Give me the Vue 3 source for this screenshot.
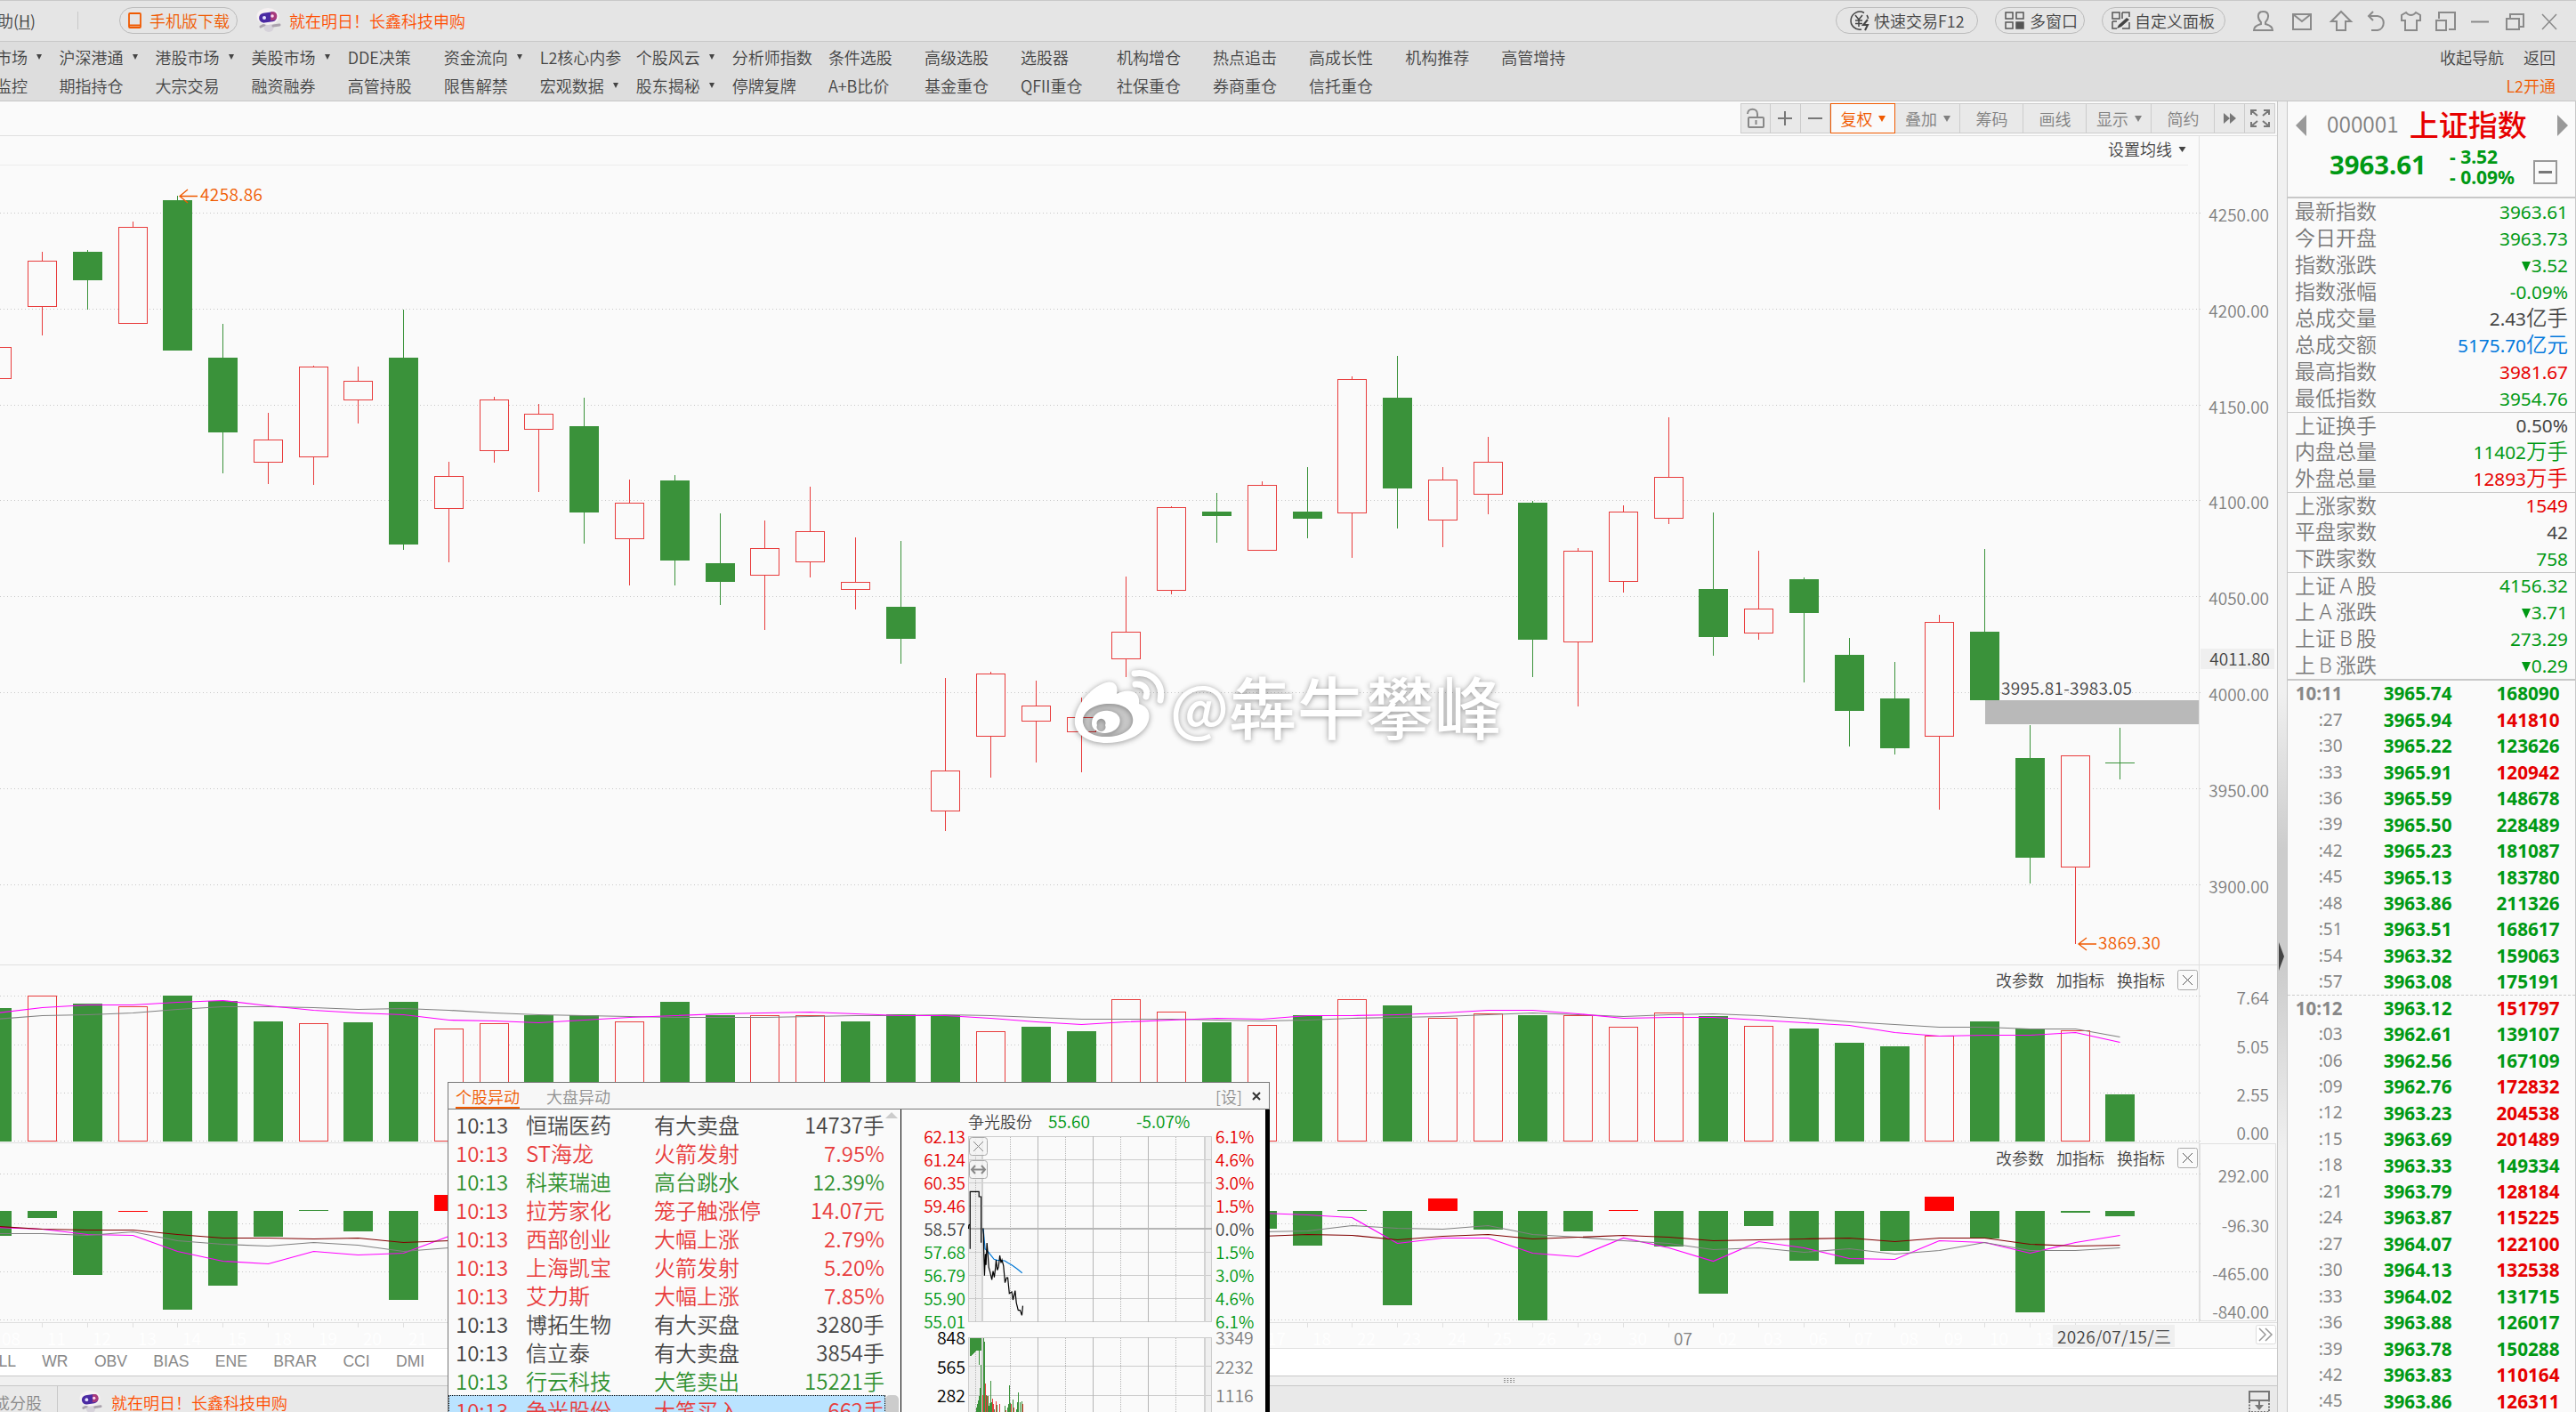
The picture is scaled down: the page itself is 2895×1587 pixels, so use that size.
<script setup>
import { computed } from "vue";

const navColumns = [
  ["沪深港通*", "期指持仓"],
  ["港股市场*", "大宗交易"],
  ["美股市场*", "融资融券"],
  ["DDE决策", "高管持股"],
  ["资金流向*", "限售解禁"],
  ["L2核心内参", "宏观数据*"],
  ["个股风云*", "股东揭秘*"],
  ["分析师指数", "停牌复牌"],
  ["条件选股", "A+B比价"],
  ["高级选股", "基金重仓"],
  ["选股器", "QFII重仓"],
  ["机构增仓", "社保重仓"],
  ["热点追击", "券商重仓"],
  ["高成长性", "信托重仓"],
  ["机构推荐", ""],
  ["高管增持", ""],
];

const stats = [
  ["最新指数", "3963.61", "", "down"],
  ["今日开盘", "3963.73", "", "down"],
  ["指数涨跌", "▼3.52", "", "down"],
  ["指数涨幅", "-0.09%", "", "down"],
  ["总成交量", "2.43", "亿手", "flat"],
  ["总成交额", "5175.70", "亿元", "blue"],
  ["最高指数", "3981.67", "", "up"],
  ["最低指数", "3954.76", "", "down"],
  ["上证换手", "0.50%", "", "flat"],
  ["内盘总量", "11402", "万手", "down"],
  ["外盘总量", "12893", "万手", "up"],
  ["上涨家数", "1549", "", "up"],
  ["平盘家数", "42", "", "flat"],
  ["下跌家数", "758", "", "down"],
  ["上证A股", "4156.32", "", "down"],
  ["上A涨跌", "▼3.71", "", "down"],
  ["上证B股", "273.29", "", "down"],
  ["上B涨跌", "▼0.29", "", "down"],
];
const ruledRows = [8, 11, 14];

const ticks = [
  ["10:11", "3965.74", "168090", "down"],
  [":27", "3965.94", "141810", "up"],
  [":30", "3965.22", "123626", "down"],
  [":33", "3965.91", "120942", "up"],
  [":36", "3965.59", "148678", "down"],
  [":39", "3965.50", "228489", "down"],
  [":42", "3965.23", "181087", "down"],
  [":45", "3965.13", "183780", "down"],
  [":48", "3963.86", "211326", "down"],
  [":51", "3963.51", "168617", "down"],
  [":54", "3963.32", "159063", "down"],
  [":57", "3963.08", "175191", "down"],
  ["10:12", "3963.12", "151797", "up"],
  [":03", "3962.61", "139107", "down"],
  [":06", "3962.56", "167109", "down"],
  [":09", "3962.76", "172832", "up"],
  [":12", "3963.23", "204538", "up"],
  [":15", "3963.69", "201489", "up"],
  [":18", "3963.33", "149334", "down"],
  [":21", "3963.79", "128184", "up"],
  [":24", "3963.87", "115225", "up"],
  [":27", "3964.07", "122100", "up"],
  [":30", "3964.13", "132538", "up"],
  [":33", "3964.02", "131715", "down"],
  [":36", "3963.88", "126017", "down"],
  [":39", "3963.78", "150288", "down"],
  [":42", "3963.83", "110164", "up"],
  [":45", "3963.86", "126311", "up"],
];

// r/g, high, body top, body bottom, low
const candles = [
  ["r", 390, 390, 425, 425],
  ["r", 283, 293, 344, 377],
  ["g", 281, 283, 315, 348],
  ["r", 249, 255, 363, 363],
  ["g", 220, 225, 394, 394],
  ["g", 364, 402, 486, 532],
  ["r", 464, 494, 519, 544],
  ["r", 411, 412, 513, 545],
  ["r", 412, 428, 449, 476],
  ["g", 348, 402, 612, 618],
  ["r", 519, 535, 571, 632],
  ["r", 446, 449, 506, 520],
  ["r", 454, 465, 482, 553],
  ["g", 447, 479, 576, 611],
  ["r", 539, 565, 605, 658],
  ["g", 534, 540, 630, 658],
  ["g", 577, 633, 654, 680],
  ["r", 585, 616, 646, 708],
  ["r", 547, 597, 631, 649],
  ["r", 604, 654, 662, 685],
  ["g", 608, 682, 718, 746],
  ["r", 762, 866, 911, 934],
  ["r", 755, 757, 827, 874],
  ["r", 765, 793, 810, 857],
  ["r", 784, 806, 822, 868],
  ["r", 648, 710, 740, 761],
  ["r", 569, 570, 663, 668],
  ["g", 554, 575, 580, 610],
  ["r", 541, 545, 618, 618],
  ["g", 525, 575, 583, 605],
  ["r", 423, 426, 576, 627],
  ["g", 400, 447, 549, 594],
  ["r", 525, 539, 584, 615],
  ["r", 491, 519, 555, 578],
  ["g", 563, 565, 719, 761],
  ["r", 616, 619, 721, 794],
  ["r", 568, 575, 653, 666],
  ["r", 469, 536, 582, 589],
  ["g", 576, 662, 716, 737],
  ["r", 619, 684, 711, 719],
  ["g", 649, 651, 689, 767],
  ["g", 717, 736, 799, 839],
  ["g", 744, 785, 841, 848],
  ["r", 691, 699, 827, 910],
  ["g", 617, 710, 787, 787],
  ["g", 815, 852, 964, 993],
  ["r", 849, 849, 974, 1061],
  ["g", 818, 857, 858, 876],
];

const volumes = [
  "g1133", "r1119", "g1128", "r1131", "g1119", "g1125", "g1148", "r1150", "g1149", "g1126",
  "r1156", "r1150", "g1141", "g1141", "r1148", "g1126", "g1141", "r1141", "r1141", "g1148",
  "g1140", "g1141", "r1159", "g1154", "g1159", "r1123", "r1137", "g1149", "r1152", "g1141",
  "r1123", "g1130", "r1144", "r1139", "g1141", "r1141", "r1154", "r1138", "g1142", "r1153",
  "g1156", "g1172", "g1176", "r1164", "g1148", "g1156", "r1158", "g1230",
];

const ZERO = 1361;
const flow = [
  1389, 1369, 1433, 1362, 1472, 1445, 1390, 1360, 1384, 1461,
  1343, 1361, 1361, 1361, 1361, 1361, 1361, 1361, 1361, 1361,
  1361, 1361, 1361, 1361, 1361, 1361, 1361, 1361, 1381, 1400,
  1360, 1467, 1347, 1382, 1484, 1384, 1360, 1401, 1454, 1378,
  1417, 1421, 1406, 1345, 1392, 1475, 1363, 1367,
];
const flowRed = [2, 9, 31, 35, 42];

const left = (i) => Math.round(31 + 50.77 * i);

const bars = computed(() =>
  candles.map(([kind, high, top, bottom, low], n) => ({
    x: left(n - 1), kind, high, top, bottom, low,
  }))
);
const volumeBars = computed(() =>
  volumes.map((v, n) => ({ x: left(n - 1), kind: v[0], top: Number(v.slice(1)) }))
);
const flowBars = computed(() =>
  flow.map((v, n) => ({
    x: left(n - 1),
    y: Math.min(v, ZERO),
    h: Math.abs(v - ZERO),
    red: flowRed.includes(n - 1),
  }))
);

const line = (ys, from) =>
  ys.map((y, n) => `${left(from + n) + 16.5},${y + 0.5}`).join(" ");

const volumeMa5 = line([
  1138, 1132, 1129, 1129, 1126, 1124, 1130, 1135, 1138, 1140, 1146, 1147, 1149, 1146, 1143, 1141,
  1139, 1138, 1137, 1139, 1141, 1141, 1144, 1148, 1151, 1148, 1146, 1144, 1145, 1141, 1141, 1140,
  1138, 1135, 1135, 1139, 1144, 1143, 1143, 1146, 1149, 1152, 1160, 1164, 1163, 1163, 1160, 1171,
], -1);
const volumeMa10 = line([
  1145, 1141, 1140, 1138, 1134, 1131, 1131, 1132, 1134, 1133, 1135, 1138, 1140, 1141, 1142, 1143,
  1143, 1143, 1142, 1141, 1141, 1140, 1141, 1143, 1145, 1145, 1145, 1146, 1147, 1146, 1144, 1143,
  1142, 1140, 1138, 1140, 1142, 1140, 1139, 1141, 1144, 1148, 1151, 1154, 1154, 1156, 1156, 1165,
], -1);
const flowLines = [
  { cls: "magenta", pts: line([1379, 1381, 1387, 1388, 1406, 1417, 1420, 1406, 1410, 1408, 1389], -1) },
  { cls: "magenta", pts: line([1361, 1363, 1365, 1368, 1397, 1391, 1391, 1408, 1412, 1391, 1402, 1417, 1395, 1402, 1414, 1415, 1394, 1396, 1408, 1396, 1388], 26) },
  { cls: "gray", pts: line([1386, 1386, 1388, 1384, 1394, 1398, 1400, 1396, 1399, 1406, 1402], -1) },
  { cls: "gray", pts: line([1385, 1384, 1383, 1377, 1380, 1381, 1377, 1387, 1390, 1394, 1397, 1404, 1402, 1407, 1403, 1409, 1405, 1396, 1405, 1405, 1402], 26) },
  { cls: "maroon", pts: line([1378, 1381, 1382, 1382, 1387, 1391, 1391, 1392, 1391, 1396, 1394], -1) },
  { cls: "maroon", pts: line([1389, 1389, 1387, 1388, 1393, 1389, 1387, 1392, 1390, 1388, 1390, 1394, 1393, 1392, 1391, 1395, 1391, 1391, 1398, 1400, 1399], 26) },
];

const gridLines = [239, 347, 455, 562, 670, 778, 886, 994, 1119, 1174, 1228, 1282, 1319, 1375, 1429, 1483];
const axisLabels = [
  ["4250.00", 242], ["4200.00", 350], ["4150.00", 458], ["4100.00", 565], ["4050.00", 673],
  ["4000.00", 781], ["3950.00", 889], ["3900.00", 997], ["7.64", 1122], ["5.05", 1177],
  ["2.55", 1231], ["0.00", 1274], ["292.00", 1322], ["-96.30", 1378], ["-465.00", 1432], ["-840.00", 1475],
];
const days = {
  "-1": "08", 0: "11", 1: "12", 2: "13", 3: "14", 4: "15", 5: "18", 6: "19", 7: "20", 8: "21",
  27: "17", 28: "18", 29: "22", 30: "23", 31: "24", 32: "25", 33: "26", 34: "29", 35: "30",
  37: "02", 38: "03", 39: "06", 40: "07", 41: "08", 42: "09", 43: "10", 44: "13",
};

const indicators = ["ROLL", "WR", "OBV", "BIAS", "ENE", "BRAR", "CCI", "DMI"];

const alerts = [
  ["恒瑞医药", "有大卖盘", "14737手", "flat"],
  ["ST海龙", "火箭发射", "7.95%", "red"],
  ["科莱瑞迪", "高台跳水", "12.39%", "green"],
  ["拉芳家化", "笼子触涨停", "14.07元", "red"],
  ["西部创业", "大幅上涨", "2.79%", "red"],
  ["上海凯宝", "火箭发射", "5.20%", "red"],
  ["艾力斯", "大幅上涨", "7.85%", "red"],
  ["博拓生物", "有大买盘", "3280手", "flat"],
  ["信立泰", "有大卖盘", "3854手", "flat"],
  ["行云科技", "大笔卖出", "15221手", "green"],
  ["争光股份", "大笔买入", "662手", "red"],
];

const miniPrices = ["62.13", "61.24", "60.35", "59.46", "58.57", "57.68", "56.79", "55.90", "55.01"];
const miniPercents = ["6.1%", "4.6%", "3.0%", "1.5%", "0.0%", "1.5%", "3.0%", "4.6%", "6.1%"];
const miniColor = (i) => (i < 4 ? "up" : i > 4 ? "down" : "flat");
// x, top, colour of the minute volume bars
const miniVolumes = [
  [1097, 1581, "g"], [1098, 1577, "g"], [1099, 1573, "g"], [1100, 1568, "g"], [1101, 1559, "g"],
  [1102, 1533, "g"], [1104, 1567, "r"], [1105, 1503, "g"], [1106, 1507, "g"], [1107, 1554, "r"],
  [1108, 1567, "g"], [1109, 1568, "r"], [1110, 1568, "g"], [1111, 1579, "g"], [1112, 1576, "g"],
  [1113, 1551, "g"], [1114, 1575, "g"], [1115, 1571, "r"], [1116, 1577, "r"], [1117, 1583, "g"],
  [1119, 1574, "r"], [1120, 1578, "g"], [1123, 1577, "r"], [1129, 1579, "g"], [1130, 1584, "r"],
  [1132, 1581, "g"], [1133, 1577, "g"], [1134, 1556, "g"], [1135, 1576, "g"], [1136, 1577, "r"],
  [1138, 1572, "g"], [1139, 1581, "r"], [1142, 1583, "g"], [1143, 1575, "g"], [1144, 1564, "g"],
  [1146, 1575, "g"], [1148, 1574, "g"], [1149, 1577, "r"],
];
</script>

<template>
  <div class="app">
    <header class="titlebar">
      <span class="menu">助(<u>H</u>)</span>
      <i class="sep"></i>
      <div class="pill phone-pill">
        <svg width="15" height="18" viewBox="0 0 15 18"><rect x="1" y="1" width="13" height="16" rx="1" fill="none" stroke="#f05a00" stroke-width="1.8" /><path d="M1 14.5H14" stroke="#f05a00" stroke-width="2" /></svg>
        手机版下载
      </div>
      <svg class="robot" width="30" height="28" viewBox="0 0 30 28"><ellipse cx="15" cy="22" rx="5.5" ry="5" fill="#d6d2da" /><path d="M6 21L10 19M20 20l7-1" stroke="#aaa2ad" stroke-width="3" stroke-linecap="round" /><ellipse cx="14" cy="9.500" rx="12.500" ry="9.500" fill="#f6f1f2" /><rect x="4" y="5" width="20" height="11" rx="5.500" transform="rotate(-8 14 10)" fill="#4b2aa3" /><path d="M17 4.500l3-.3c5 0 6 8 1 9.500l-4 .5z" fill="#a83a7c" /><circle cx="10" cy="11" r="2" fill="#e8e4ff" /><circle cx="19" cy="9" r="1.800" fill="#ffd9ee" /></svg>
      <span class="promo">就在明日！长鑫科技申购</span>
      <div class="title-right">
        <div class="pill p1">
          <svg width="26" height="24" viewBox="0 0 26 24" fill="none" stroke="#444" stroke-width="1.5"><path d="M17 3.500A10 10 0 1 0 14 22M20 6a10 10 0 0 1 1.500 4" /><path d="M7 6l4 5 4-5M11 11v8M7 12h8M7 15.500h8" /><path d="M21 11l-5 6h5l-3 6" stroke-width="2" /></svg>
          快速交易F12
        </div>
        <div class="pill p2">
          <svg width="22" height="20" viewBox="0 0 22 20" fill="none" stroke="#555" stroke-width="1.500"><rect x="1" y="1" width="8" height="7" /><rect x="13" y="1" width="8" height="7" /><rect x="1" y="12" width="8" height="7" /><rect x="13" y="12" width="8" height="7" fill="#555" /></svg>
          多窗口
        </div>
        <div class="pill p3">
          <svg width="22" height="20" viewBox="0 0 22 20" fill="none" stroke="#555" stroke-width="1.500"><path d="M1 1h8v7H1zM12 1h8v5M12 1v7M1 11v8h5M1 11h5M20 12v7h-8" /><path d="M17 7l3 2-9 8-5 2 2-4z" fill="#444" stroke="none" /></svg>
          自定义面板
        </div>
        <svg class="win-icons" width="350" height="30" viewBox="2527 9 350 30" fill="none" stroke="#8a8a8a" stroke-width="2">
          <path d="M2541 26c-4-4-5-12 2.500-12s6.500 8 2.500 12v2c3 1 8 2 8 7h-21c0-5 5-6 8-7z" />
          <path d="M2577 17h20v17h-20zM2577 17l10 8 10-8" />
          <path d="M2631 14l11 11h-6v10h-10V25h-6z" />
          <path d="M2667 14l-5 5 5 5M2662 19h10c9 1 9 14 0 16h-7" />
          <path d="M2704 15c3 4 8 4 11 0l5 3v6h-4v11h-13V24h-4v-6z" />
          <path d="M2741 22v-7h18v19h-7M2738 24h11v11h-11z" />
          <path d="M2777 25.500h20" />
          <path d="M2821 21v-4h15v14h-4M2817 22h14v12h-14z" />
          <path d="M2857 17l16 17M2873 17l-16 17" stroke-width="1.500" />
        </svg>
      </div>
    </header>

    <nav class="nav">
      <div class="nav-col first">
        <span>市场<b class="caret"></b></span>
        <span>监控</span>
      </div>
      <div v-for="col in navColumns" :key="col[0]" class="nav-col">
        <span v-for="item in col" :key="item">{{ item.replace("*", "") }}<b v-if="item.endsWith('*')" class="caret"></b></span>
      </div>
      <div class="nav-right">
        <p><span>收起导航</span><span>返回</span></p>
        <p class="orange">L2开通</p>
      </div>
    </nav>

    <main class="main">
      <section class="chart-pane">
        <div class="tools">
          <div class="tool w34"><svg width="22" height="24" viewBox="0 0 22 24" fill="none" stroke="#888" stroke-width="2"><rect x="3" y="11" width="17" height="11" rx="1" /><path d="M2 7c0-7 11-7 11 0v4M11.500 14v5" /></svg></div>
          <div class="tool w34"><svg width="18" height="18" viewBox="0 0 18 18" stroke="#777" stroke-width="2"><path d="M9 1v16M1 9h16" /></svg></div>
          <div class="tool w34"><svg width="18" height="18" viewBox="0 0 18 18" stroke="#777" stroke-width="2"><path d="M1 9h16" /></svg></div>
          <div class="tool w73 active">复权<b class="caret"></b></div>
          <div class="tool w73">叠加<b class="caret"></b></div>
          <div class="tool w71">筹码</div>
          <div class="tool w71">画线</div>
          <div class="tool w73">显示<b class="caret"></b></div>
          <div class="tool w71">简约</div>
          <div class="tool w34"><svg width="16" height="12" viewBox="0 0 16 12" fill="#777"><path d="M1 0l7 6-7 6zM8 0l7 6-7 6z" /></svg></div>
          <div class="tool w34"><svg width="22" height="20" viewBox="0 0 22 20" fill="none" stroke="#777" stroke-width="2"><path d="M1 6V1h6M2 2l6 5M15 1h6v5M20 2l-6 5M1 14v5h6M2 18l6-5M15 19h6v-5M20 18l-6-5" /></svg></div>
        </div>

        <svg class="chart" width="2560" height="1362" viewBox="0 153 2560 1362">
          <g shape-rendering="crispEdges">
            <path d="M0 185.500H2459" stroke="#ececec" />
            <path d="M2471.500 153V1486M0 1084.500H2559M0 1284.500H2472M0 1486.500H2559" class="frame" />
            <rect x="2472.500" y="1285.500" width="85" height="199" class="frame" />
            <path v-for="y in gridLines" :key="y" :d="`M0 ${y + 0.5}H2476`" class="dots" />

            <g v-for="b in bars" :key="b.x">
              <path :d="`M${b.x + 16.5} ${b.high}V${b.top}M${b.x + 16.5} ${b.bottom}V${b.low}`" :class="'wick-' + b.kind" />
              <rect v-if="b.kind === 'g'" :x="b.x" :y="b.top" width="33" :height="b.bottom - b.top" class="solid" />
              <rect v-else :x="b.x + 0.5" :y="b.top + 0.5" width="32" :height="b.bottom - b.top" class="hollow" />
            </g>
            <path d="M2231 787H2471V814H2231z" fill="#b9b9b9" />

            <g v-for="v in volumeBars" :key="'v' + v.x">
              <rect v-if="v.kind === 'g'" :x="v.x" :y="v.top" width="33" :height="1283 - v.top" class="solid" />
              <rect v-else :x="v.x + 0.5" :y="v.top + 0.5" width="32" :height="1282 - v.top" class="hollow" />
            </g>
            <rect v-for="f in flowBars" :key="'f' + f.x" :x="f.x" :y="f.y" width="33" :height="f.h" :class="f.red ? 'flow-red' : 'solid'" />
            <path v-for="i in 48" :key="i" :d="`M${left(i - 2) + 16.5} 1487v5`" class="frame" />
          </g>

          <g fill="none" stroke-width="1.2">
            <polyline :points="volumeMa10" class="gray" />
            <polyline :points="volumeMa5" class="magenta" />
            <polyline v-for="(l, i) in flowLines" :key="i" :points="l.pts" :class="l.cls" />
          </g>

          <g class="orange-text">
            <path d="M211 213l-9 7.500 9 7.500M202 220.500h20" />
            <text x="225" y="226" textLength="70">4258.86</text>
            <path d="M2345 1054l-9 7 9 7M2336 1061h20" />
            <text x="2358" y="1067" textLength="70">3869.30</text>
          </g>
          <text x="2249" y="781" class="dark" font-size="19" textLength="147">3995.81-3983.05</text>

          <text x="2369" y="175" class="dark">设置均线</text>
          <path d="M2448.500 165h8l-4 6z" fill="#444" />
          <g v-for="y in [1102, 1302]" :key="y" class="dark">
            <text x="2243" :y="y + 7">改参数</text>
            <text x="2311" :y="y + 7">加指标</text>
            <text x="2379" :y="y + 7">换指标</text>
            <rect x="2447.500" :y="y - 11.5" width="22" height="22" rx="2" fill="none" stroke="#aaa" />
            <path :d="`M2453 ${y - 6}l11 11m0 -11l-11 11`" stroke="#555" />
          </g>

          <text v-for="a in axisLabels" :key="a[0]" x="2550" :y="a[1] + 7" class="axis">{{ a[0] }}</text>
          <rect x="2473" y="729" width="83" height="23" fill="#efefef" />
          <text x="2551" y="748" class="axis current">4011.80</text>

          <text v-for="(d, i) in days" :key="i" :x="left(Number(i)) + 22" y="1512" class="day">{{ d }}</text>
          <text x="1881" y="1512" font-size="19" fill="#808080">07</text>
          <rect x="2307" y="1489" width="137" height="25" fill="#efefef" />
          <text x="2312" y="1510" font-size="19" class="dark" textLength="128">2026/07/15/三</text>
          <rect x="2535.500" y="1489.500" width="22" height="21" rx="2" fill="#fff" stroke="#ddd" />
          <path d="M2539 1493l7 7-7 7M2546 1493l7 7-7 7" fill="none" stroke="#999" stroke-width="1.500" />

          <g class="watermark">
            <path fill-rule="evenodd" d="M1208 814C1206 798 1221 777 1238 769C1247 764 1258 766 1255 780C1266 774 1282 775 1280 791C1290 794 1294 802 1290 812C1286 824 1268 835 1244 835C1223 835 1210 826 1208 814zM1217 812C1219 824 1232 829 1247 828C1264 827 1275 818 1273 807C1271 796 1260 790 1244 791C1227 792 1216 801 1217 812z" />
            <path fill="#000" fill-opacity=".15" d="M1217 812C1219 824 1232 829 1247 828C1264 827 1275 818 1273 807C1271 796 1260 790 1244 791C1227 792 1216 801 1217 812z" />
            <path fill-rule="evenodd" d="M1227 813C1227 803 1236 798 1246 799C1255 800 1261 806 1258 814C1255 822 1244 826 1236 823C1230 821 1227 818 1227 813zM1233 815a5 5 0 1 0 9 0a5 5 0 1 0-9 0z" />
            <path d="M1276 769c9-1 15 6 12 14M1275 757c19-3 33 11 29 30" fill="none" stroke="#fff" stroke-width="7" stroke-linecap="round" />
            <text x="1315" y="821" font-size="68">@</text>
            <text x="1381 1458 1535 1612" y="825">犇牛攀峰</text>
          </g>
        </svg>

        <div class="indicators"><span v-for="n in indicators" :key="n">{{ n }}</span></div>
        <div class="handle"><svg width="12" height="6" viewBox="0 0 12 6"><path d="M1 0v6M4.500 0v6M8 0v6M11.500 0v6" stroke="#777" stroke-width="1.500" stroke-dasharray="1 1" /></svg></div>
        <footer class="bottom">
          <span class="tab">成分股</span>
          <svg class="robot" width="28" height="26" viewBox="0 0 30 28"><ellipse cx="15" cy="22" rx="5.500" ry="5" fill="#d6d2da" /><path d="M6 21L10 19M20 20l7-1" stroke="#aaa2ad" stroke-width="3" stroke-linecap="round" /><ellipse cx="14" cy="9.500" rx="12.500" ry="9.500" fill="#f6f1f2" /><rect x="4" y="5" width="20" height="11" rx="5.500" transform="rotate(-8 14 10)" fill="#4b2aa3" /><path d="M17 4.500l3-.3c5 0 6 8 1 9.500l-4 .5z" fill="#a83a7c" /><circle cx="10" cy="11" r="2" fill="#e8e4ff" /><circle cx="19" cy="9" r="1.800" fill="#ffd9ee" /></svg>
          <span class="promo">就在明日！长鑫科技申购</span>
          <svg class="dock" width="24" height="25" viewBox="0 0 24 25" fill="none" stroke="#777" stroke-width="2"><path d="M1 1h22v10H1z" /><path d="M1 12v12h22V12" stroke-dasharray="2 1.500" /><path d="M12 11v7" /><path d="M7 16h10l-5 6z" fill="#777" stroke="none" /></svg>
        </footer>

        <div class="popup">
          <div class="popup-head">
            <span class="on">个股异动</span>
            <span>大盘异动</span>
            <span class="set">[设]</span>
            <svg width="10" height="10" viewBox="0 0 10 10"><path d="M1 1l8 8M9 1L1 9" stroke="#333" stroke-width="2" /></svg>
          </div>
          <div class="popup-body">
            <div class="alerts">
              <div v-for="(a, i) in alerts" :key="i" class="alert" :class="[a[3], { picked: i === 10 }]">
                <span>10:13</span><span>{{ a[0] }}</span><span>{{ a[1] }}</span><span class="val">{{ a[2] }}</span>
              </div>
            </div>
            <div class="scroll"><i class="up-arrow"></i><i class="thumb"></i></div>
            <svg class="mini" width="409" height="341" viewBox="1013 1246 409 341">
              <text x="1088" y="1267" class="dark">争光股份</text>
              <text x="1178" y="1267" font-size="19" class="down">55.60</text>
              <text x="1277" y="1267" font-size="19" class="down">-5.07%</text>
              <g v-for="(p, i) in miniPrices" :key="p" font-size="19" :class="miniColor(i)">
                <text x="1085" :y="1284 + i * 26" text-anchor="end">{{ p }}</text>
                <text x="1366" :y="1284 + i * 26">{{ miniPercents[i] }}</text>
              </g>
              <g v-for="(p, i) in [['848', '3349'], ['565', '2232'], ['282', '1116']]" :key="p[0]" font-size="19.5">
                <text x="1085" :y="1510 + i * 32.5" text-anchor="end" fill="#000">{{ p[0] }}</text>
                <text x="1366" :y="1510 + i * 32.5" fill="#808080">{{ p[1] }}</text>
              </g>
              <g shape-rendering="crispEdges">
                <path d="M1089 1277h15v208h-15zM1354 1277h7v208h-7zM1089 1503h15v84h-15zM1354 1503h7v84h-7z" fill="#efefef" />
                <path v-for="i in 9" :key="i" :d="`M1088 ${1250.5 + i * 26}H1362`" stroke="#ccc" />
                <path d="M1088 1502.500H1362M1088 1534.500H1362M1088 1567.500H1362M1088.500 1276V1485M1361.500 1276V1485M1088.500 1502V1587M1361.500 1502V1587" stroke="#ccc" />
                <path d="M1166.500 1276V1485M1228.500 1276V1485M1290.500 1276V1485M1166.500 1502V1587M1228.500 1502V1587M1290.500 1502V1587" stroke="#b5b5b5" />
                <path d="M1096.500 1277V1485M1135.500 1277V1485M1197.500 1277V1485M1259.500 1277V1485M1321.500 1277V1485M1096.500 1503V1587M1135.500 1503V1587M1197.500 1503V1587M1259.500 1503V1587M1321.500 1503V1587" stroke="#b5b5b5" stroke-dasharray="1 1" />
                <path d="M1104 1277V1485M1354 1277V1485M1104 1503V1587M1354 1503V1587" stroke="#d2d2d2" stroke-width="2" />
                <path d="M1088 1380H1362" stroke="#b5b5b5" stroke-width="2" />
                <path d="M1090 1503h13v14h-2v16h-1v-16h-2l-3 2-3 4h-2z" class="solid" />
                <path v-for="v in miniVolumes" :key="v[0]" :d="`M${v[0] + 0.5} ${v[1]}V1587`" :class="'wick-' + v[2]" />
              </g>
              <g fill="#f5f5f5" fill-opacity=".8" stroke="#aaa">
                <rect x="1089.500" y="1277.500" width="20" height="20" rx="3" />
                <rect x="1089.500" y="1303.500" width="20" height="20" rx="3" />
                <path d="M1094 1282l11 11m0-11l-11 11" stroke="#888" />
                <path d="M1092 1313.500h15M1096 1309l-4 4.500 4 4.500M1103 1309l4 4.500-4 4.500" fill="none" stroke="#888" stroke-width="2" />
              </g>
              <g class="intraday" transform="translate(1000 1200) scale(.34437 .33333)">
                <polyline stroke="#0078d7" points="305,540 308,575 311,608 320,617 330,630 340,643 350,646 375,648 385,655 400,664 415,675 432,689" />
                <polyline stroke="#000" points="257,540 258,528 262,525 262,608 262,415 291,415 291,432 298,432 298,587" />
                <polyline stroke="#000" points="304,538 306,560 307,625 309,698 312,625 314,662 317,588 320,625 323,670 327,685 333,712 337,683 341,704 345,670 347,645 351,680 355,668 359,630 363,655 366,645 371,665 376,722 381,705 385,705 390,758 398,753 402,780 409,749 413,790 419,815 425,815 431,832 434,800" />
              </g>
            </svg>
          </div>
        </div>
      </section>

      <div class="splitter"><svg width="8" height="32" viewBox="0 0 8 32"><path d="M1 0l6 16-6 16z" fill="#444" /></svg></div>

      <aside class="side">
        <div class="quote">
          <div class="name-row">
            <svg width="12" height="24" viewBox="0 0 12 24"><path d="M12 0v24L0 12z" fill="#999" /></svg>
            <span class="code">000001</span>
            <span class="name">上证指数</span>
            <svg class="next" width="12" height="24" viewBox="0 0 12 24"><path d="M0 0v24l12-12z" fill="#999" /></svg>
          </div>
          <div class="price-row">
            <span class="last">3963.61</span>
            <div class="change"><span>- 3.52</span><span>- 0.09%</span></div>
            <i class="collapse"></i>
          </div>
        </div>
        <div class="stats">
          <div v-for="(s, i) in stats" :key="s[0]" class="stat" :class="{ ruled: ruledRows.includes(i) }">
            <span class="label"><template v-for="(c, k) in s[0]" :key="k"><em v-if="c < 'Z'">{{ c }}</em><template v-else>{{ c }}</template></template></span>
            <span :class="s[3]"><small v-if="s[1][0] === '▼'" class="tri"></small>{{ s[1].replace("▼", "") }}<span class="unit">{{ s[2] }}</span></span>
          </div>
        </div>
        <div class="ticks">
          <div v-for="(t, i) in ticks" :key="i" class="tick" :class="{ minute: t[0].length > 3, dashed: i === 12 }">
            <span class="time">{{ t[0] }}</span>
            <span class="down">{{ t[1] }}</span>
            <span :class="t[3]">{{ t[2] }}</span>
          </div>
        </div>
      </aside>
    </main>
  </div>
</template>

<style>
body {
  margin: 0;
  overflow: hidden;
}
</style>

<style scoped>
.app {
  width: 2895px;
  height: 1587px;
  display: flex;
  flex-direction: column;
  overflow: hidden;
  background: #fafafa;
  color: #444;
  font-family: "Noto Sans CJK SC", sans-serif;
  font-size: 18px;
  font-weight: 350;
  line-height: 1;
  white-space: nowrap;
}
* {
  box-sizing: border-box;
}
svg {
  flex: none;
  display: block;
}
.up { color: #e60000; fill: #e60000; }
.down { color: #009914; fill: #009914; }
.flat { color: #444; fill: #444; }
.blue { color: #0078dc; }
.orange { color: #f05a00; }

/* title bar */
.titlebar {
  height: 47px;
  flex: none;
  display: flex;
  align-items: center;
  background: #e5e5e5;
  border-top: 1px solid #c8c8c8;
  border-bottom: 1px solid #c8c8c8;
  padding-bottom: 1px;
}
.menu {
  margin-left: -3px;
  width: 90px;
}
.sep {
  width: 1px;
  height: 20px;
  background: #c8c8c8;
  margin-right: 46px;
}
.pill {
  height: 30px;
  display: flex;
  align-items: center;
  border: 1px solid #bbb;
  border-radius: 15px;
}
.phone-pill {
  width: 133px;
  padding-left: 9px;
  gap: 9px;
  color: #f05a00;
}
.titlebar .robot {
  margin: 0 8px 0 20px;
}
.promo {
  color: #ff4e00;
}
.title-right {
  margin-left: auto;
  display: flex;
  align-items: center;
  padding-right: 18px;
}
.p1 { width: 160px; padding-left: 14px; gap: 2px; }
.p2 { width: 101px; margin-left: 19px; padding-left: 10px; gap: 6px; }
.p3 { width: 139px; margin-left: 19px; padding-left: 10px; gap: 4px; }
.win-icons {
  margin-left: 26px;
}

/* navigation */
.nav {
  height: 67px;
  flex: none;
  display: flex;
  background: #ddd;
  border-bottom: 1px solid #c6c6c6;
  padding-top: 1px;
}
.nav-col {
  width: 108.050px;
  flex: none;
}
.nav-col.first {
  width: 71.500px;
  margin-left: -5px;
}
.nav-col span {
  display: flex;
  align-items: center;
  height: 32px;
}
.caret {
  border: 3.500px solid transparent;
  border-top: 6px solid currentColor;
  border-bottom: 0;
  margin-left: 10px;
}
.nav-right {
  margin-left: auto;
  padding-right: 23px;
  text-align: right;
}
.nav-right p {
  margin: 0;
  height: 32px;
  line-height: 32px;
}
.nav-right span + span {
  margin-left: 22px;
}

.main {
  display: flex;
  flex: 1;
}
.chart-pane {
  position: relative;
  width: 2560px;
  border-right: 1px solid #c8c8c8;
  display: flex;
  flex-direction: column;
}
.tools {
  height: 39px;
  flex: none;
  display: flex;
  justify-content: flex-end;
  padding: 2px 2px 2px 0;
  border-bottom: 1px solid #e0e0e0;
}
.tool {
  height: 34px;
  display: flex;
  align-items: center;
  justify-content: center;
  color: #808080;
  background: #e9e9e9;
  border: 1px solid #ccc;
  border-left-width: 0;
}
.tool:first-child { border-left-width: 1px; }
.tool .caret {
  margin-left: 7px;
  border-width: 7px 4.500px 0;
}
.w34 { width: 33.800px; }
.w71 { width: 71px; }
.w73 { width: 73px; }
.tool.active {
  color: #f05a00;
  background: #fafafa;
  border: 1px solid #f05a00;
}

/* chart */
.chart { overflow: hidden; }
.frame { stroke: #e0e0e0; fill: none; }
.dots { stroke: #c8c8c8; stroke-dasharray: 1 3; }
.solid { fill: #3a923a; }
.hollow { fill: #fafafa; stroke: #e83c3c; }
.wick-r { stroke: #e83c3c; }
.wick-g { stroke: #3a923a; }
.flow-red { fill: #f00; }
.magenta { stroke: #f0f; }
.gray { stroke: #808080; }
.maroon { stroke: #800000; }
.dark { fill: #444; }
.orange-text text { fill: #f05a00; font-size: 19px; }
.orange-text path { fill: none; stroke: #f05a00; stroke-width: 1.300; }
.axis { font-size: 19px; fill: #808080; text-anchor: end; }
.current { fill: #444; }
.day { font-size: 19px; fill: #fff; }
.watermark {
  fill: #fff;
  font-size: 76px;
  font-weight: 500;
  filter: drop-shadow(0 1px 3px rgba(0, 0, 0, .4));
}

.indicators {
  height: 32px;
  display: flex;
  align-items: center;
  gap: 29.300px;
  background: #fff;
  border-top: 1px solid #e0e0e0;
  border-bottom: 1px solid #c8c8c8;
  color: #888;
  font-family: "Liberation Sans", sans-serif;
  font-size: 17.600px;
}
.indicators span:first-child { margin-left: -28px; }
.handle {
  height: 11px;
  display: flex;
  align-items: center;
  padding-left: 1690px;
  background: #f0f0f0;
  border-bottom: 1px solid #c8c8c8;
}
.bottom {
  height: 30px;
  display: flex;
  align-items: center;
  background: #e9e9e9;
}
.tab {
  margin-left: -7px;
  width: 72px;
  height: 100%;
  line-height: 36px;
  color: #888;
  border-right: 1px solid #c8c8c8;
}
.bottom .robot { margin: 6px 9px 0 23px; }
.bottom .promo { margin-top: 6px; }
.dock { margin: 4px 8px 0 auto; }

/* floating alert window */
.popup {
  position: absolute;
  left: 503px;
  top: 1102px;
  width: 924px;
  height: 371px;
  background: #fafafa;
  border: 1px solid #777;
  border-right: 0;
  border-bottom: 0;
}
.popup-head {
  height: 30px;
  display: flex;
  align-items: center;
  background: #f7f7f7;
  border-right: 1px solid #777;
  border-bottom: 1px solid #777;
  color: #909090;
  padding: 0 9px 0 8px;
}
.popup-head span { margin-right: 30px; }
.popup-head .on {
  height: 29px;
  line-height: 30px;
  color: #f05a00;
  border-bottom: 2px solid #f05a00;
}
.popup-head .set {
  margin: 0 11px 0 auto;
}
.popup-body {
  display: flex;
  height: 341px;
  border-right: 5px solid #000;
}
.alerts { width: 491px; padding-top: 1px; overflow: hidden; }
.alert {
  height: 32px;
  display: grid;
  grid-template-columns: 79px 144px 1fr auto;
  align-items: center;
  padding: 0 1px 0 8px;
  font-size: 24px;
  border: 0 dotted #000;
}
.alert.red { color: #e83c3c; }
.alert.green { color: #2f902f; }
.alert.picked {
  background: #bae3ff;
  border-width: 1px 1px 0;
  padding: 0 0 0 7px;
}
.scroll {
  width: 18px;
  border-right: 1px solid #000;
  display: flex;
  flex-direction: column;
  justify-content: space-between;
}
.up-arrow {
  margin-top: 3px;
  width: 0;
  border: 7.500px solid transparent;
  border-top: 0;
  border-bottom: 7px solid #ccc;
}
.thumb {
  width: 15px;
  height: 20px;
  background: #ccc;
  border-radius: 5px 5px 0 0;
}
.intraday polyline {
  fill: none;
  stroke-width: 1.200;
  vector-effect: non-scaling-stroke;
}

.splitter {
  width: 10px;
  display: flex;
  padding-top: 945px;
  align-items: flex-start;
  background: linear-gradient(#f0f0f0 45%, #ccc 57%, #ccc 66%, #f0f0f0 80%);
}

/* quote panel */
.side {
  width: 325px;
  border-left: 1px solid #c8c8c8;
  border-right: 1px solid #c8c8c8;
  font-family: "Noto Sans", "Noto Sans CJK SC", sans-serif;
  font-weight: 400;
}
.quote {
  height: 109px;
  border-bottom: 2px solid #c8c8c8;
}
.name-row {
  display: flex;
  align-items: center;
  padding: 9px 8px 0 9px;
  height: 44px;
}
.code {
  font: 350 24.500px "Noto Sans CJK SC", sans-serif;
  line-height: 28px;
  padding-bottom: 3px;
  color: #808080;
  margin: 0 12px 0 23px;
}
.name {
  font-size: 33px;
  font-weight: 500;
  color: #e60000;
}
.next { margin-left: auto; }
.price-row {
  display: flex;
  align-items: center;
  padding: 7px 20px 0 47px;
  color: #009914;
  font-weight: bold;
}
.last { font-size: 29.300px; width: 135px; padding-bottom: 4px; }
.change {
  display: flex;
  flex-direction: column;
  font-size: 21px;
  line-height: 23px;
}
.collapse {
  margin: 10px 0 0 auto;
  width: 27px;
  height: 27px;
  border: 2px solid #999;
  background: linear-gradient(#777, #777) center / 15px 3px no-repeat;
}
.stats {
  border-bottom: 2px solid #c8c8c8;
}
.stat {
  height: 30px;
  display: flex;
  justify-content: space-between;
  align-items: center;
  padding: 0 8px 2px;
  font-size: 20.800px;
  line-height: 28px;
}
.stat.ruled { border-top: 1px solid #c8c8c8; }
.label {
  font-size: 23px;
  font-weight: 350;
  color: #777;
}
.label em {
  display: inline-block;
  width: 23px;
  text-align: center;
  font-style: normal;
}
.unit {
  font-size: 23.500px;
  font-weight: 350;
}
.tri {
  display: inline-block;
  border: 5px solid transparent;
  border-top: 11px solid #009914;
  border-bottom: 0;
  margin: 0 1px 1px 0;
}
.tick {
  height: 29.460px;
  display: grid;
  grid-template-columns: 61.500px 123px 121px;
  align-items: center;
  text-align: right;
  font-size: 20.700px;
  font-weight: bold;
}
.time {
  color: #888;
  font-size: 19px;
  font-weight: normal;
}
.minute .time {
  font-size: 20.500px;
  font-weight: bold;
}
.dashed { border-top: 1px dashed #ccc; }
</style>
